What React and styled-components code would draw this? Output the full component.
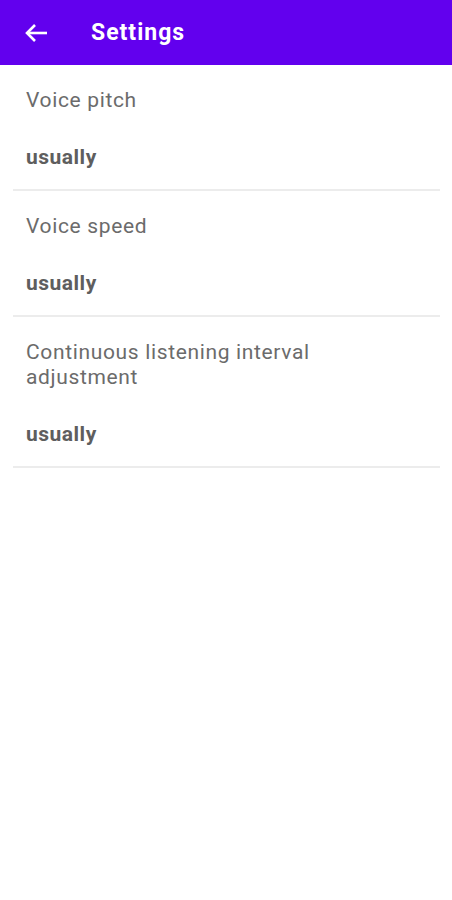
import React from 'react';
import styled, { createGlobalStyle } from 'styled-components';

const GlobalStyle = createGlobalStyle`
    body {
        margin: 0;
        background: #ffffff;
        font-family: Roboto, "Noto Sans", sans-serif;
    }
`

const Page = styled.div`
    width: 452px;
    min-height: 900px;
    background: #ffffff;
`

const Toolbar = styled.header`
    height: 65px;
    background: #6200ee;
    display: flex;
    align-items: center;
    padding-left: 24px;
    box-sizing: border-box;
`

const BackButton = styled.button`
    border: none;
    background: none;
    padding: 0;
    width: 24px;
    height: 20px;
    display: flex;
    align-items: center;
    justify-content: center;
    cursor: pointer;
`

const Title = styled.h1`
    margin: 0 0 0 43px;
    color: #ffffff;
    font-size: 23px;
    font-weight: 700;
    letter-spacing: 1px;
`

const List = styled.div`
    display: flex;
    flex-direction: column;
`

const Item = styled.div`
    margin: 0 12px 0 13px;
    padding: 23px 13px 19px;
    border-bottom: 2px solid #ececec;
    display: flex;
    flex-direction: column;
    gap: 31px;
`

const Label = styled.div`
    color: #6b6b6b;
    font-size: 21px;
    line-height: 25px;
    letter-spacing: 0.65px;
    max-width: 320px;
`

const Value = styled.div`
    color: #5e5e5e;
    font-size: 21px;
    font-weight: 700;
    line-height: 26px;
    letter-spacing: 0.5px;
`

const ArrowBack = () => (
    <svg width="24" height="20" viewBox="0 0 24 20" fill="none">
        <path d="M23 10H3" stroke="#fff" strokeWidth="2.6" />
        <path d="M11 2L3 10L11 18" stroke="#fff" strokeWidth="2.6" />
    </svg>
)

const settings = [
    { label: 'Voice pitch', value: 'usually' },
    { label: 'Voice speed', value: 'usually' },
    { label: 'Continuous listening interval adjustment', value: 'usually' },
]

const App = () => {
    return (
        <Page>
            <GlobalStyle />
            <Toolbar>
                <BackButton aria-label="Back">
                    <ArrowBack />
                </BackButton>
                <Title>Settings</Title>
            </Toolbar>
            <List>
                {settings.map((s) => (
                    <Item key={s.label}>
                        <Label>{s.label}</Label>
                        <Value>{s.value}</Value>
                    </Item>
                ))}
            </List>
        </Page>
    )
}

export default App;
